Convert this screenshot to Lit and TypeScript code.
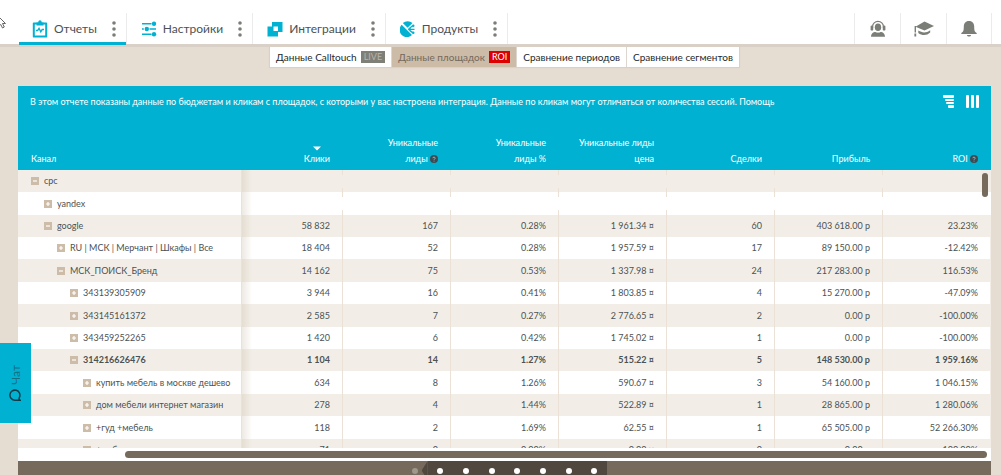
import { LitElement, html, css, svg } from "lit";
import { customElement } from "lit/decorators.js";
import { classMap } from "lit/directives/class-map.js";
import { styleMap } from "lit/directives/style-map.js";

interface Row {
  level: number;
  open?: boolean;
  name: string;
  bold?: boolean;
  values: string[];
}

const rows: Row[] = [
  { level: 0, open: true, name: "cpc", values: [] },
  { level: 1, name: "yandex", values: [] },
  { level: 1, open: true, name: "google", values: ["58 832", "167", "0.28%", "1 961.34 ¤", "60", "403 618.00 р", "23.23%"] },
  { level: 2, name: "RU | МСК | Мерчант | Шкафы | Все", values: ["18 404", "52", "0.28%", "1 957.59 ¤", "17", "89 150.00 р", "-12.42%"] },
  { level: 2, open: true, name: "МСК_ПОИСК_Бренд", values: ["14 162", "75", "0.53%", "1 337.98 ¤", "24", "217 283.00 р", "116.53%"] },
  { level: 3, name: "343139305909", values: ["3 944", "16", "0.41%", "1 803.85 ¤", "4", "15 270.00 р", "-47.09%"] },
  { level: 3, name: "343145161372", values: ["2 585", "7", "0.27%", "2 776.65 ¤", "2", "0.00 р", "-100.00%"] },
  { level: 3, name: "343459252265", values: ["1 420", "6", "0.42%", "1 745.02 ¤", "1", "0.00 р", "-100.00%"] },
  { level: 3, open: true, name: "314216626476", bold: true, values: ["1 104", "14", "1.27%", "515.22 ¤", "5", "148 530.00 р", "1 959.16%"] },
  { level: 4, name: "купить мебель в москве дешево", values: ["634", "8", "1.26%", "590.67 ¤", "3", "54 160.00 р", "1 046.15%"] },
  { level: 4, name: "дом мебели интернет магазин", values: ["278", "4", "1.44%", "522.89 ¤", "1", "28 865.00 р", "1 280.06%"] },
  { level: 4, name: "+гуд +мебель", values: ["118", "2", "1.69%", "62.55 ¤", "1", "65 505.00 р", "52 266.30%"] },
  { level: 4, name: "+мебель", values: ["71", "0", "0.00%", "0.00 ¤", "0", "0.00 р", "-100.00%"] },
];

const reportsIcon = svg`<svg width="16" height="18" viewBox="0 0 16 18" aria-hidden="true">
  <path fill="#00b1d2" fill-rule="evenodd" d="M1.5 2.500H4.500V2.200h1.700C6.400 1 7 .2 8 .2s1.600.8 1.800 2H11.500V2.500h3c.4 0 .7.300.7.700v13.500c0 .4-.3.700-.7.700h-13c-.4 0-.7-.3-.7-.7V3.200c0-.4.300-.7.700-.7zM2.800 4.500v11h10.400v-11h-1.700v1h-7v-1z"/>
  <path d="M4 10.500h1.600L7 8.300l1.800 3.600L10.200 9.500H12" fill="none" stroke="#00b1d2" stroke-width="1.300"/></svg>`;
const settingsIcon = svg`<svg width="16" height="16" viewBox="0 0 16 16" aria-hidden="true">
  <g stroke="#00b1d2" stroke-width="1.500"><path d="M1 2.800h9.500M1 8h1.800M8.500 8H15M1 13.200h9.500"/></g>
  <g fill="#00b1d2"><circle cx="13" cy="2.800" r="2.200"/><circle cx="5.800" cy="8" r="2.200"/><circle cx="13" cy="13.200" r="2.200"/></g></svg>`;
const integrationsIcon = svg`<svg width="16" height="16" viewBox="0 0 16 16" aria-hidden="true">
  <path fill="#00b1d2" fill-rule="evenodd" d="M5 1h10.500v10H11v4.500H.5V5.500H5zM6.500 5.500V10H11V5.500z"/></svg>`;
const productsIcon = svg`<svg width="16" height="16" viewBox="0 0 16 16" aria-hidden="true"><g fill="#00b1d2">
  <path d="M1.700 3.800 12 14A7 7 0 0 1 1.700 3.800z"/><path d="M2.800 2A7.300 7.300 0 0 1 12.500 2L7.600 6.800z"/></g>
  <g fill="none" stroke="#00b1d2" stroke-width="1.300"><path d="M9.500 7.200 13 4.500M10 8.300h4.500M9.500 9.400l3.500 2.500"/></g>
  <g fill="#00b1d2"><circle cx="9.500" cy="8.300" r="1.400"/><circle cx="13.300" cy="4.800" r="1.200"/><circle cx="13.300" cy="11.700" r="1.200"/></g></svg>`;
const supportIcon = svg`<svg width="16" height="18" viewBox="0 0 16 18" aria-hidden="true">
  <path d="M2.600 8V6.400a5.400 5 0 0 1 10.800 0V8" fill="none" stroke="#7a7e77" stroke-width="1.200"/>
  <g fill="#7a7e77"><rect x=".6" y="5.600" width="2.600" height="5" rx="1.200"/><rect x="12.800" y="5.600" width="2.600" height="5" rx="1.200"/>
  <ellipse cx="8" cy="7.200" rx="3.200" ry="3.800"/><path d="M1 16.800c.2-3.500 2.500-4.700 4.400-4.700.9.700 4.300.7 5.200 0 1.900 0 4.200 1.200 4.400 4.700z"/></g></svg>`;
const academyIcon = svg`<svg width="20" height="18" viewBox="0 0 20 18" aria-hidden="true"><g fill="#7a7e77">
  <path d="M10.500 1.500 20 6l-9.500 4.600L1.500 6.800z"/><path d="M4.300 10.600c4.200 2.600 8.200 2.300 11.900-.4v2.300c-3.300 3.300-8.300 3.300-11.900.4z"/>
  <path d="M.6 6h1.400v6.500H.6zM.4 13.500h1.800v3H.4z"/></g></svg>`;
const bellIcon = svg`<svg width="16" height="18" viewBox="0 0 16 18" aria-hidden="true"><path fill="#7a7e77" d="M8 1c3.600 0 5.200 2.500 5.200 5.500 0 4 .3 5.300 2.500 6.500v1H.3v-1c2.200-1.200 2.500-2.500 2.500-6.500C2.800 3.500 4.400 1 8 1zM6 15h4c0 2-4 2-4 0z"/></svg>`;
const helpIcon = svg`<svg class="help" width="8" height="8" viewBox="0 0 8 8" aria-hidden="true"><circle cx="4" cy="4" r="4" fill="#3f4a50"/>
  <path d="M2.800 3.200c0-1.500 2.400-1.400 2.400 0 0 .8-1.200.8-1.200 1.600M4 5.700v.8" fill="none" stroke="#8fd0dd" stroke-width=".8"/></svg>`;

const sections = [
  { label: "Отчеты", icon: reportsIcon, active: true },
  { label: "Настройки", icon: settingsIcon },
  { label: "Интеграции", icon: integrationsIcon },
  { label: "Продукты", icon: productsIcon },
];

const tools = [
  { label: "Поддержка", icon: supportIcon },
  { label: "Обучение", icon: academyIcon },
  { label: "Уведомления", icon: bellIcon },
];

@customElement("app-root")
export class AppRoot extends LitElement {
  static styles = css`
    :host {
      display: flex;
      flex-direction: column;
      height: 100vh;
      overflow: hidden;
      box-sizing: border-box;
      background: #e6ddd2;
      color: #4b5255;
      font-family: Lato, "Noto Sans", sans-serif;
      font-size: 9px;
    }
    * { box-sizing: border-box; }
    a { color: inherit; text-decoration: none; }
    button { font: inherit; color: inherit; border: 0; padding: 0; background: none; display: grid; place-items: center; }
    svg { display: block; }

    .top { display: flex; justify-content: space-between; background: #fff; padding: 13px 9px 0 18px; box-shadow: 0 3px 0 #d9d0c7; }
    .sections, .tools { display: flex; }
    .section { display: flex; align-items: center; height: 31px; padding: 0 6px 0 14px; border-right: 1px solid #ebebeb; position: relative; }
    .section.active::after { content: ""; position: absolute; left: 1px; right: 0; bottom: -1px; height: 3px; background: #00b1d2; }
    .link { display: flex; align-items: center; gap: 6px; font-size: 12px; }
    .more { width: 12px; height: 24px; margin-left: 11px; }
    .tool { width: 46px; height: 31px; border-left: 1px solid #ebebeb; }
    .tool:last-child { border-right: 1px solid #ebebeb; }

    .tabs { display: flex; align-self: center; margin: 3px 0 19px 8px; box-shadow: 0 0 1px 1px #dbd0c4; }
    .tab { display: flex; align-items: center; gap: 4px; height: 20px; padding: 0 6px; background: #fff; color: #22282b; border-right: 1px solid #ddd6ce; font-size: 10px; white-space: nowrap; }
    .tab:last-child { border-right: 0; }
    .tab.current { background: #cbbba7; color: #75695b; }
    .badge { padding: 0 3px; font-size: 9px; line-height: 12px; background: #7e8078; color: #b9b3a8; }
    .badge.red { background: #dd0000; color: #fff; }

    .panel { flex: 1; min-height: 0; display: flex; flex-direction: column; margin: 0 10px 0 18px; background: #fff; position: relative; }
    .info { display: flex; align-items: center; padding: 0 12px; height: 30px; background: #00b1d2; color: #fff; }
    .note { flex: 1; margin: 0; white-space: nowrap; }
    .views { display: flex; gap: 12px; }
    .viewport { flex: 1; min-height: 0; overflow: hidden; position: relative; }

    table { width: 100%; table-layout: fixed; border-collapse: separate; border-spacing: 0; }
    .c-name { width: 23%; }
    .c-clicks { width: 10.4%; }
    th { height: 54px; padding: 0 13px 3px; vertical-align: bottom; text-align: right; font-weight: 400; line-height: 16px; background: #00b1d2; color: #fff; white-space: nowrap; }
    th:first-child { text-align: left; }
    .sorted { display: inline-block; }
    .caret { margin: 0 auto; }
    .help { display: inline-block; vertical-align: -1px; }
    td { height: 22px; }
    tbody tr { background: #fff; }
    tbody tr:nth-child(odd) { background: #f2eee7; }
    tbody tr:nth-child(5n + 2) td, tbody tr:nth-child(5n) td { height: 23px; }
    td { padding: 0 12px; text-align: right; border-right: 1px solid #ebe1d7; white-space: nowrap; line-height: 12px; }
    td.name { text-align: left; padding: 0 0 0 13px; }
    td:nth-child(2) { background: linear-gradient(90deg, rgba(205, 190, 172, 0.35), transparent 10px); }
    td:last-child { border-right-color: #f2eee7; }
    .blank { border-right: 0; }
    .blank:not(:last-child) { background: linear-gradient(#ebe1d7 5px, transparent 5px 18px, #ebe1d7 18px) right / 1px 100% no-repeat; }
    .blank.blank:nth-child(2) {
      background: linear-gradient(#ebe1d7 5px, transparent 5px 18px, #ebe1d7 18px) right / 1px 100% no-repeat,
        linear-gradient(90deg, rgba(205, 190, 172, 0.35), transparent 10px);
    }
    .bold { font-weight: 700; }
    .node { display: flex; align-items: center; gap: 5px; }
    .toggle { width: 8px; height: 8px; background: #cdbca8; }

    .vthumb { position: absolute; top: 57px; right: 3px; width: 6px; height: 24px; border-radius: 3px; background: #766a5c; }
    .track { height: 13px; padding: 3px 4px 3px 107px; background: #fff; }
    .hthumb { height: 7px; border-radius: 4px; background: #766a5c; }

    .foot { height: 14px; overflow: hidden; background: #766a5c; }
    .dots { display: flex; width: 205px; height: 19px; margin: 0 auto; }
    .dots button { flex: 1; }
    .dots button::after { content: ""; width: 6px; height: 6px; border-radius: 3px; background: #fff; }
    .dots .prev::after { background: #a0978d; }
    .pages { flex: 7; display: flex; background: #50473f; position: relative; }
    .pages::before { content: ""; position: absolute; left: -6px; top: 0; width: 6px; height: 19px; background: #50473f; clip-path: polygon(100% 0, 0 50%, 100% 100%); }

    .chat { position: fixed; left: 0; top: 343px; width: 31px; height: 80px; background: #00b1d2; color: #176f84; font-size: 12px; }
    .chat span { display: flex; align-items: center; gap: 4px; writing-mode: vertical-rl; transform: rotate(180deg); }
    .cursor { position: absolute; left: 0; top: 18px; }
  `;

  private toggle(row: Row) {
    return html`<button class="toggle" aria-label=${row.open ? "Свернуть" : "Развернуть"}>
      <svg width="8" height="8" viewBox="0 0 8 8"><path d=${row.open ? "M2 4h4" : "M2 4h4M4 2v4"} stroke="#fff" stroke-width="1.200" /></svg>
    </button>`;
  }

  private row(row: Row) {
    const cells = row.values.length
      ? row.values.map((v) => html`<td>${v}</td>`)
      : Array.from({ length: 7 }, () => html`<td class="blank"></td>`);
    return html`<tr class=${classMap({ bold: !!row.bold })}>
      <td class="name">
        <div class="node" style=${styleMap({ paddingLeft: `${row.level * 13}px` })}>${this.toggle(row)}<span>${row.name}</span></div>
      </td>
      ${cells}
    </tr>`;
  }

  render() {
    return html`
      <header class="top">
        <nav class="sections">
          ${sections.map(
            (s) => html`<div class=${classMap({ section: true, active: !!s.active })}>
              <a class="link" href="#">${s.icon}<span>${s.label}</span></a>
              <button class="more" aria-label="Меню: ${s.label}">
                <svg width="4" height="16" viewBox="0 0 4 16" fill="#7a7e77"><circle cx="2" cy="2" r="1.800" /><circle cx="2" cy="8" r="1.800" /><circle cx="2" cy="14" r="1.800" /></svg>
              </button>
            </div>`
          )}
        </nav>
        <div class="tools">${tools.map((t) => html`<button class="tool" aria-label=${t.label}>${t.icon}</button>`)}</div>
        <svg class="cursor" width="7" height="12" viewBox="0 0 7 12" aria-hidden="true"><path d="M-2-2 5.500 5.500H2.500L4.300 9 2.500 10 .8 6.500-1 8" fill="#fff" stroke="#666" /></svg>
      </header>

      <nav class="tabs">
        <a class="tab" href="#">Данные Calltouch <span class="badge">LIVE</span></a>
        <a class="tab current" href="#">Данные площадок <span class="badge red">ROI</span></a>
        <a class="tab" href="#">Сравнение периодов</a>
        <a class="tab" href="#">Сравнение сегментов</a>
      </nav>

      <main class="panel">
        <div class="info">
          <p class="note">
            В этом отчете показаны данные по бюджетам и кликам с площадок, с которыми у вас настроена интеграция. Данные по кликам могут отличаться от
            количества сессий. <a href="#">Помощь</a>
          </p>
          <div class="views">
            <button aria-label="Дерево">
              <svg width="11" height="13" viewBox="0 0 11 13" fill="#fff"><rect width="11" height="3" rx="1" /><rect x="2" y="4" width="9" height="2" rx="1" /><rect x="3" y="7" width="8" height="2" rx="1" /><rect x="5" y="10" width="6" height="3" rx="1" /></svg>
            </button>
            <button aria-label="Столбцы">
              <svg width="13" height="13" viewBox="0 0 13 13" fill="#fff"><rect width="3" height="13" rx="1" /><rect x="5" width="3" height="13" rx="1" /><rect x="10" width="3" height="13" rx="1" /></svg>
            </button>
          </div>
        </div>
        <div class="viewport">
          <table>
            <colgroup>
              <col class="c-name" /><col class="c-clicks" /><col /><col /><col /><col /><col /><col />
            </colgroup>
            <thead>
              <tr>
                <th>Канал</th>
                <th>
                  <span class="sorted"><svg class="caret" width="8" height="5" viewBox="0 0 8 5" aria-hidden="true"><path d="M0 .5h8L4 4.500z" fill="#fff" /></svg>Клики</span>
                </th>
                <th>Уникальные<br />лиды ${helpIcon}</th>
                <th>Уникальные<br />лиды %</th>
                <th>Уникальные лиды<br />цена</th>
                <th>Сделки</th>
                <th>Прибыль</th>
                <th>ROI ${helpIcon}</th>
              </tr>
            </thead>
            <tbody>
              ${rows.map((r) => this.row(r))}
            </tbody>
          </table>
          <div class="vthumb"></div>
        </div>
        <div class="track"><div class="hthumb"></div></div>
        <footer class="foot">
          <div class="dots">
            <button class="prev" aria-label="Назад"></button>
            <div class="pages">${[1, 2, 3, 4, 5, 6, 7].map((n) => html`<button aria-label="Страница ${n}"></button>`)}</div>
          </div>
        </footer>
      </main>

      <button class="chat">
        <span>
          <svg width="12" height="13" viewBox="0 0 12 13" aria-hidden="true"><path d="M1 1.500H6A5 5 0 1 1 1.500 4.500Q2.500 2.500 1 1.500z" fill="none" stroke="#0b3c4a" stroke-width="1.500" /></svg>
          Чат
        </span>
      </button>
    `;
  }
}
